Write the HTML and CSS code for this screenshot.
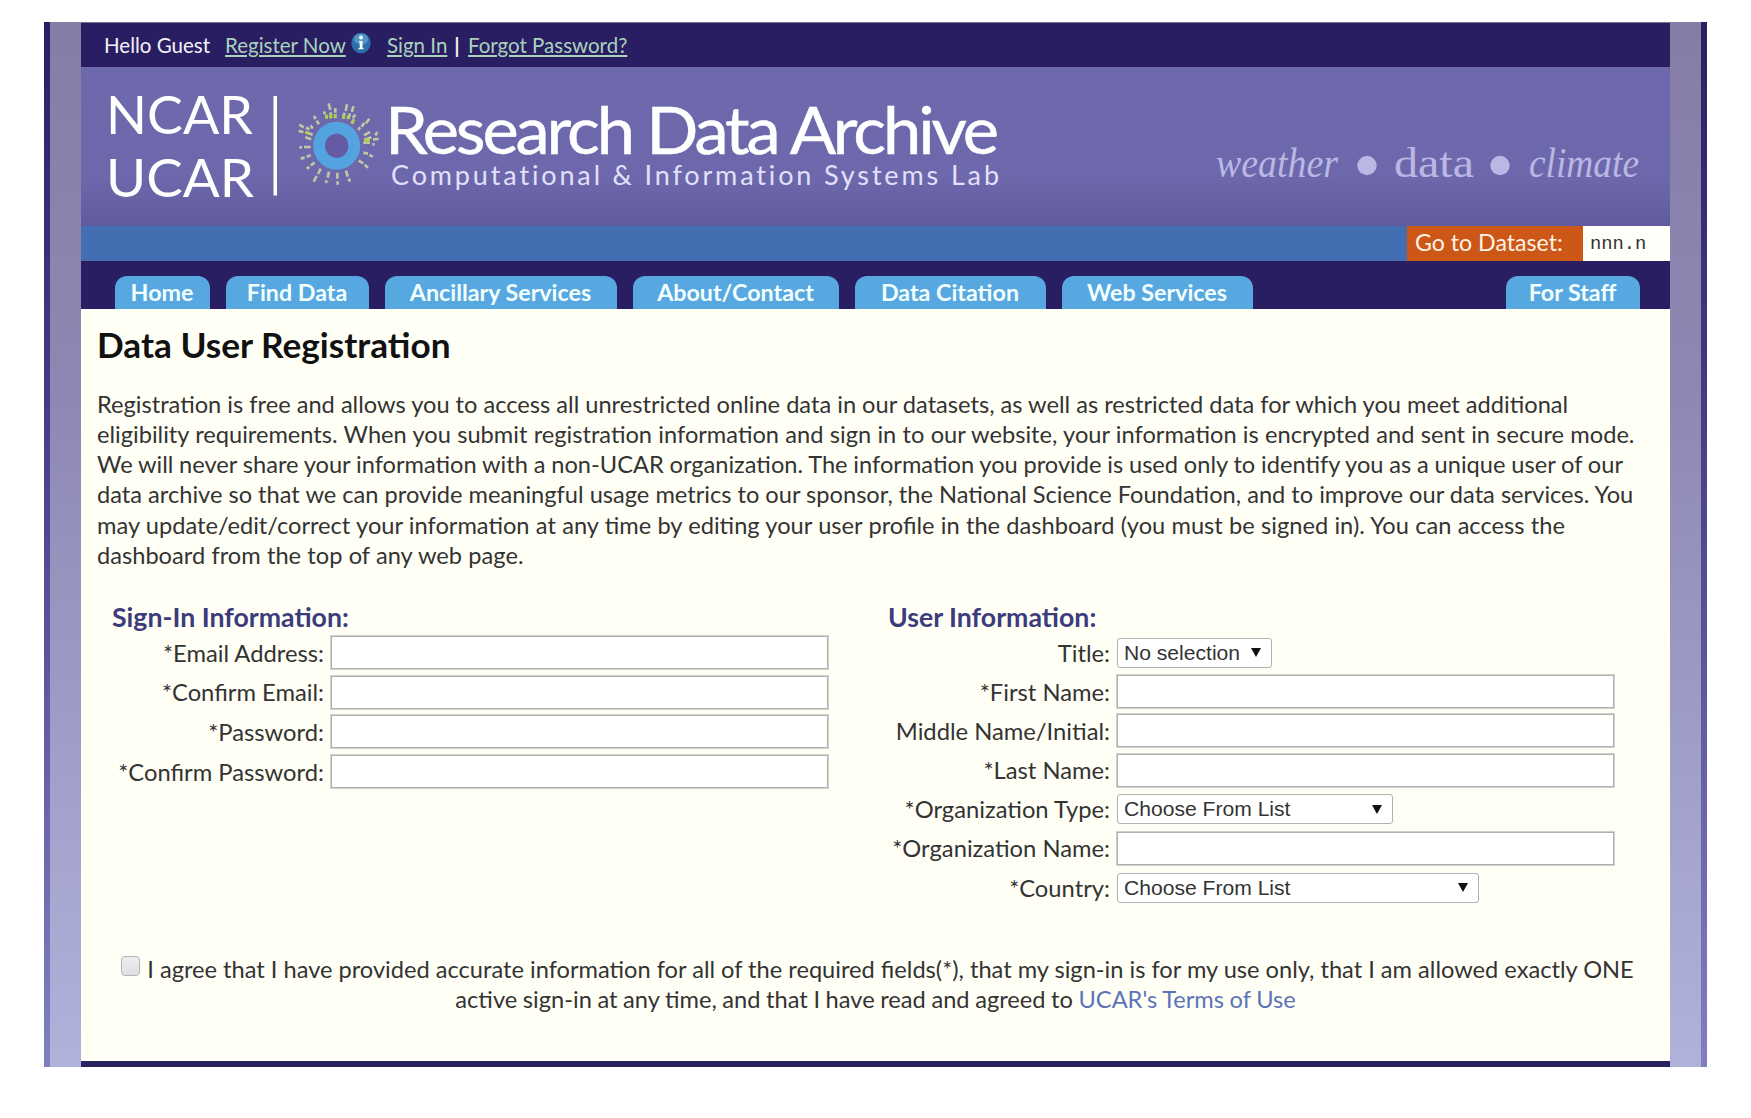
FILE: index.html
```html
<!DOCTYPE html>
<html lang="en">
<head>
<meta charset="utf-8">
<title>Data User Registration</title>
<link rel="stylesheet" href="styles.css">
</head>
<body>
<div class="frame">
<div class="page">
  <div class="topbar">
    <span class="hello">Hello Guest</span>
    <a class="register">Register Now</a>
    <svg class="info" width="20" height="22" viewBox="0 0 20 22"><ellipse cx="10" cy="11" rx="9.700" ry="10.300" fill="#2c6eac"/><ellipse cx="10" cy="7" rx="7" ry="5.500" fill="#5594c6"/><circle cx="10" cy="5.500" r="1.900" fill="#fff"/><path d="M8 9h3.500v7h1v1.300h-5v-1.300h1.200v-5.700h-.700z" fill="#fff"/></svg>
    <a class="signin">Sign In</a>
    <span class="bar">|</span>
    <a class="forgot">Forgot Password?</a>
  </div>
  <header class="banner">
    <svg class="logo" width="930" height="159" viewBox="81 67 930 159">
      <g class="org">
        <text x="106" y="133.500" textLength="147" lengthAdjust="spacingAndGlyphs">NCAR</text>
        <text x="106" y="196.500" textLength="148" lengthAdjust="spacingAndGlyphs">UCAR</text>
      </g>
      <rect x="273.500" y="96" width="3.500" height="99.500" fill="#fff"/>
      <g transform="translate(290 90) scale(.3333)" stroke="#bdc7a4" stroke-width="8" fill="none">
        <path d="M116 40l5 20M102 64l3 9M122 67v18M136 54v14M136 72v13M108 75l3 10M72 78l5 9M80 92l7 11M171 43l-4 20M190 48l-4 18M163 68l-3 18M180 70l-5 17M196 74l-8 10M192 88l-6 14M238 86l-10 14M223 98l-8 12M210 112l-5 8M28 104l13 8M26 122l14 5M48 112l10 7M62 106l6 10M46 126l22 8M46 142l18 6M240 126l-18 10M262 126l-6 10M244 142l-22 8M266 147l-17 1M240 158l-20 0M254 163l-7 0M28 172h8M42 171h20M32 206l12-3M50 200l12-4M220 188l14 3M238 195l11 5M50 236l8-5M62 226l12-8M206 212l14 8M224 224l10 9M92 236l-8 16M80 258l-9 17M117 245l-4 18M110 271l-2 8M142 248v18M143 274v10M168 242l5 18M176 266l4 9"/>
        <path stroke="#b0d044" d="M110 74v12M123 70v15M135 72v12M162 76l-2 10M176 77l-4 10M190 90l-5 10M48 127l9 4M222 150h18"/>
      </g>
      <ellipse cx="336.700" cy="145.700" rx="17.500" ry="18" fill="none" stroke="#53a3e0" stroke-width="12"/>
      <ellipse cx="336.700" cy="145.700" rx="11.500" ry="12" fill="#655ba5"/>
      <text class="name" x="385" y="153.500" textLength="611" lengthAdjust="spacingAndGlyphs">Research Data Archive</text>
      <text class="lab" x="391" y="184.500" textLength="608">Computational &amp; Information Systems Lab</text>
    </svg>
    <svg class="tagline" width="440" height="60" viewBox="1210 135 440 60">
      <text class="it" x="1216" y="177" textLength="122" lengthAdjust="spacingAndGlyphs">weather</text>
      <ellipse cx="1367" cy="165.500" rx="9.700" ry="9.700"/>
      <text x="1394" y="177" textLength="80" lengthAdjust="spacingAndGlyphs">data</text>
      <ellipse cx="1500" cy="165.500" rx="9.700" ry="9.700"/>
      <text class="it" x="1529" y="177" textLength="110" lengthAdjust="spacingAndGlyphs">climate</text>
    </svg>
  </header>
  <div class="goto">
    <label>Go to Dataset:</label>
    <input value="nnn.n">
  </div>
  <nav class="tabs">
    <a class="t1">Home</a>
    <a class="t2">Find Data</a>
    <a class="t3">Ancillary Services</a>
    <a class="t4">About/Contact</a>
    <a class="t5">Data Citation</a>
    <a class="t6">Web Services</a>
    <a class="t7">For Staff</a>
  </nav>
  <main>
    <h1>Data User Registration</h1>
    <p class="intro">
      <span>Registration is free and allows you to access all unrestricted online data in our datasets, as well as restricted data for which you meet additional</span><br>
      <span class="loose">eligibility requirements. When you submit registration information and sign in to our website, your information is encrypted and sent in secure mode.</span><br>
      <span class="tight">We will never share your information with a non-UCAR organization. The information you provide is used only to identify you as a unique user of our</span><br>
      <span>data archive so that we can provide meaningful usage metrics to our sponsor, the National Science Foundation, and to improve our data services. You</span><br>
      <span class="loose">may update/edit/correct your information at any time by editing your user profile in the dashboard (you must be signed in). You can access the</span><br>
      <span class="loose">dashboard from the top of any web page.</span>
    </p>
    <div class="forms">
      <section class="signin-info">
        <h2>Sign-In Information:</h2>
        <div class="row"><label>*Email Address:</label><input></div>
        <div class="row"><label>*Confirm Email:</label><input></div>
        <div class="row"><label>*Password:</label><input></div>
        <div class="row"><label>*Confirm Password:</label><input></div>
      </section>
      <section class="user-info">
        <h2>User Information:</h2>
        <div class="row"><label>Title:</label><div class="select s1"><span>No selection</span><i></i></div></div>
        <div class="row"><label>*First Name:</label><input></div>
        <div class="row"><label>Middle Name/Initial:</label><input></div>
        <div class="row"><label>*Last Name:</label><input></div>
        <div class="row"><label>*Organization Type:</label><div class="select s2"><span>Choose From List</span><i></i></div></div>
        <div class="row"><label>*Organization Name:</label><input></div>
        <div class="row"><label>*Country:</label><div class="select s3"><span>Choose From List</span><i></i></div></div>
      </section>
    </div>
    <div class="agree">
      <div class="agree-line"><b class="check"></b><span>I agree that I have provided accurate information for all of the required fields(*), that my sign-in is for my use only, that I am allowed exactly ONE</span></div>
      <div class="agree-line second"><span>active sign-in at any time, and that I have read and agreed to <a>UCAR's Terms of Use</a></span></div>
    </div>
  </main>
</div>
</div>
</body>
</html>
```
FILE: styles.css
```css
* { box-sizing: border-box; }
body { margin: 0; width: 1751px; height: 1118px; overflow: hidden; background: #fff; color: #333; font: 23.640px/30.150px Lato, Carlito, "Open Sans", sans-serif; }
.frame { width: 1663px; height: 1045px; margin: 22px 0 0 44px; padding: 0 6px; background: linear-gradient(#2b1f63, #443a80 35%, #8080be); }
.page { height: 1045px; padding: 0 31px; background: linear-gradient(#857da6, #8d88b3 35%, #b0b2dc); display: flex; flex-direction: column; }
span, a, label { white-space: nowrap; }
svg { overflow: visible; flex: none; }
.topbar { height: 45px; background: #2a1e62; color: #f3f2f8; display: flex; align-items: center; padding: 0 0 0 23px; font-size: 20.500px; line-height: 24px; border-top: 1px solid #77728f; }
.topbar a { color: #a9d3bd; text-decoration: underline; }
.hello { width: 105px; }
.register { width: 120px; margin-left: 16px; }
.info { margin: -5px 0 0 6px; }
.topbar .signin { margin-left: 16px; width: 60px; }
.bar { width: 20px; text-align: center; font-weight: 700; }
.topbar .forgot { margin-left: 1px; }
.banner { height: 159px; background: linear-gradient(#6d69ac, #6c68ab 70%, #605b9c); display: flex; align-items: flex-start; }
.logo text { font-family: Lato, Carlito, sans-serif; fill: #fff; }
.logo .org { font-size: 53px; }
.logo .name { font-size: 66px; letter-spacing: -3px; stroke: #fff; stroke-width: .5px; }
.logo .lab { font-size: 27px; fill: #e2e0fa; font-variant-ligatures: none; }
.tagline { margin: 68px 0 0 199px; fill: #bab7e4; }
.tagline text { font-family: "Liberation Serif", serif; font-size: 43px; }
.tagline .it { font-style: italic; }
.goto { height: 35px; background: #436fb2; display: flex; justify-content: flex-end; }
.goto label { width: 176px; background: #cc5716; color: #fff3e6; padding-left: 8px; font-size: 23.150px; line-height: 32px; }
.goto input { width: 87px; border: 0; padding: 0 0 0 7px; background: #fffffa; color: #333; font: 18.800px "Liberation Mono", monospace; }
.tabs { height: 48px; background: #2a1e62; padding: 15px 30px 0 34px; display: flex; gap: 16px; }
.tabs a { height: 33px; background: #57a7e0; color: #f2ffff; border-radius: 12px 12px 0 0; font-size: 23.250px; font-weight: 700; text-align: center; line-height: 33px; padding-right: 1px; }
.t1 { width: 95px; } .t2 { width: 143px; } .t3 { width: 232px; } .t4 { width: 206px; } .t5 { width: 191px; } .t6 { width: 191px; } .t7 { width: 134px; margin-left: auto; }
main { height: 758px; background: #fffff6; border-bottom: 6px solid #29235f; padding: 0 0 0 16px; }
h1 { margin: 0; padding-top: 15px; font-size: 35.200px; line-height: 40px; color: #111; font-weight: 700; }
.intro { margin: 25px 0 0; height: 181px; }
.loose { word-spacing: .240px; }
.tight { word-spacing: -.250px; }
.forms { display: flex; margin-top: 31px; height: 320px; }
.signin-info { width: 776px; }
h2 { margin: 0 0 0 15px; font-size: 26.700px; line-height: 33px; color: #3c3c7c; height: 32px; font-weight: 700; }
.row { display: flex; height: 39.600px; align-items: center; }
.row label { width: 227px; text-align: right; margin-right: 7px; font-size: 23.750px; }
.user-info .row label { width: 237px; }
.user-info .row { height: 39.200px; }
.row input { width: 497px; height: 33px; border: 1.500px solid #b0b0b0; outline: .500px solid #d0d0cc; background: #fff; padding: 0; }
.select { height: 30px; border: 1.500px solid #b2b2b2; border-radius: 3px; background: #fff; padding: 0 10px 0 6px; display: flex; align-items: center; justify-content: space-between; font: 21.100px "Liberation Sans", sans-serif; }
.select i { border: 5px solid transparent; border-top: 9px solid #111; border-bottom: 0; }
.s1 { width: 155px; } .s2 { width: 276px; } .s3 { width: 362px; }
.agree { margin-top: 33px; }
.agree-line { display: flex; justify-content: center; margin-right: 12px; }
.second { margin-right: 16px; word-spacing: -.450px; }
.check { flex: none; width: 19px; height: 20px; border: 1.500px solid #b5b5b5; border-radius: 4px; background: linear-gradient(#efeff1, #dedee4); margin: 2px 7px 0 0; }
.agree a { color: #5b74b8; }
```
